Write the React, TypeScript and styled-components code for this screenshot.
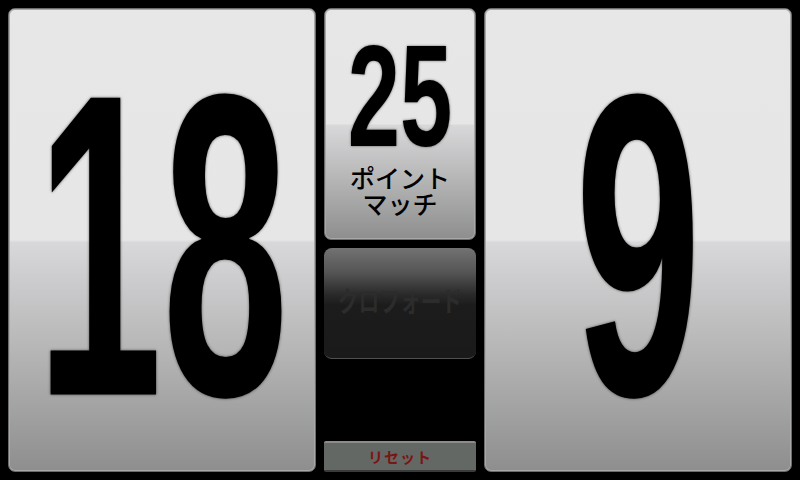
import React from "react";
import styled, { createGlobalStyle } from "styled-components";

const Global = createGlobalStyle`
  html, body { margin: 0; padding: 0; background: #000; }
  body { width: 800px; height: 480px; overflow: hidden; font-family: "Liberation Sans", "Noto Sans CJK JP", sans-serif; }
`;

const Screen = styled.div`
  width: 800px;
  height: 480px;
  box-sizing: border-box;
  padding: 8px;
  display: flex;
  gap: 8px;
  background: #000;
`;

const Card = styled.div`
  box-sizing: border-box;
  border-radius: 7px;
  border: 1px solid #6c6c6c;
  box-shadow: inset 0 0 0 1px #a8a8a8;
  background: linear-gradient(
    to bottom,
    #e7e7e7 0%,
    #e6e6e6 50%,
    #d8d8da 50.5%,
    #b4b4b5 75%,
    #8d8e8d 100%
  );
  display: flex;
  align-items: center;
  justify-content: center;
  overflow: hidden;
`;

const ScoreCard = styled(Card)`
  width: 308px;
  height: 464px;
`;

const Digits = styled.span<{ $sx: number; $sy: number; $size: number; $dy: number }>`
  display: inline-block;
  font-family: "Liberation Sans", "DejaVu Sans", sans-serif;
  font-weight: 700;
  font-size: ${(p) => p.$size}px;
  line-height: 0.75;
  color: #000;
  transform: translateY(${(p) => p.$dy}px) scale(${(p) => p.$sx}, ${(p) => p.$sy});
  text-shadow: 0 0 2px rgba(0, 0, 0, 0.6);
  white-space: nowrap;
`;

const Middle = styled.div`
  width: 152px;
  height: 464px;
  display: flex;
  flex-direction: column;
`;

const MatchCard = styled(Card)`
  height: 232px;
  flex-direction: column;
  justify-content: flex-start;
  padding-top: 53px;
`;

const MatchLabel = styled.div`
  font-family: "Noto Sans CJK JP", sans-serif;
  font-weight: 500;
  font-size: 25px;
  line-height: 26px;
  color: #000;
  text-align: center;
  margin-top: 31px;
  white-space: nowrap;
`;

const PlayerButton = styled.div`
  margin-top: 8px;
  height: 111px;
  box-sizing: border-box;
  border-radius: 8px;
  border-bottom: 1px solid #505050;
  background: linear-gradient(
    to bottom,
    #727272 0%,
    #555 22%,
    #2a2a2a 42%,
    #1c1c1c 52%,
    #1a1a1a 100%
  );
  display: flex;
  align-items: center;
  justify-content: center;
  overflow: hidden;
`;

const PlayerName = styled.span`
  display: inline-block;
  font-family: "Noto Sans CJK JP", sans-serif;
  font-weight: 700;
  font-size: 28px;
  line-height: 1;
  color: #2c2c2c;
  white-space: nowrap;
  transform: translateY(-3px) scaleX(0.74);
`;

const Spacer = styled.div`
  flex: 1;
`;

const ResetButton = styled.div`
  height: 31px;
  box-sizing: border-box;
  background: #646864;
  border-top: 2px solid #8c8c8c;
  border-bottom: 2px solid #3a3a3a;
  border-radius: 2px;
  display: flex;
  align-items: center;
  justify-content: center;
  font-family: "Noto Sans CJK JP", sans-serif;
  font-weight: 700;
  font-size: 15px;
  color: #7a1616;
  letter-spacing: 1px;
`;

export default function App() {
  return (
    <>
      <Global />
      <Screen>
        <ScoreCard>
          <Digits $size={220} $sx={1.03} $sy={1.96} $dy={6}>18</Digits>
        </ScoreCard>
        <Middle>
          <MatchCard>
            <Digits $size={94} $sx={1} $sy={1.53} $dy={0}>25</Digits>
            <MatchLabel>
              ポイント
              <br />
              マッチ
            </MatchLabel>
          </MatchCard>
          <PlayerButton>
            <PlayerName>クロフォード</PlayerName>
          </PlayerButton>
          <Spacer />
          <ResetButton>リセット</ResetButton>
        </Middle>
        <ScoreCard>
          <Digits $size={220} $sx={1.03} $sy={1.96} $dy={6}>9</Digits>
        </ScoreCard>
      </Screen>
    </>
  );
}
